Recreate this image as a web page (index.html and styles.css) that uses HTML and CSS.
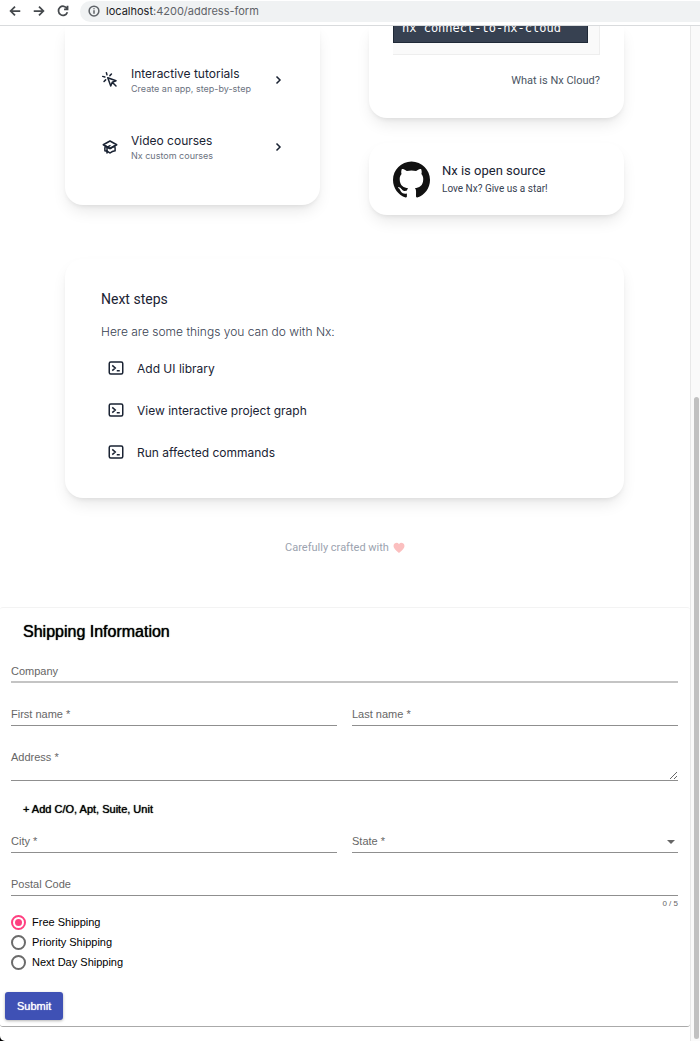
FILE: index.html
```html
<!DOCTYPE html>
<html lang="en">
<head>
    <meta charset="UTF-8">
    <meta name="viewport" content="width=device-width, initial-scale=1.0">
    <title>Address Form</title>
    <link rel="stylesheet" href="styles.css">
</head>
<body>

<!-- icons used more than once -->
<svg class="sprite" aria-hidden="true">
    <symbol id="chevron" viewBox="0 0 24 24"><path d="M9 5l7 7-7 7"/></symbol>
    <symbol id="terminal" viewBox="0 0 24 24"><path d="M7 8.500l4 3.500-4 3.500m6 0h4M5 20h14a2 2 0 002-2V6a2 2 0 00-2-2H5a2 2 0 00-2 2v12a2 2 0 002 2z"/></symbol>
</svg>

<div class="window">
    <header class="toolbar">
        <button type="button" aria-label="Back"><svg viewBox="0 0 16 16"><path d="M14 8H3M8 3L3 8l5 5"/></svg></button>
        <button type="button" aria-label="Forward"><svg viewBox="0 0 16 16"><path d="M2 8h11M8 3l5 5-5 5"/></svg></button>
        <button type="button" aria-label="Reload"><svg viewBox="0 0 16 16"><path d="M12.6 5.2A5.2 5.2 0 1013 9.400M13.200 2v4H9.200"/></svg></button>
        <div class="address">
            <svg viewBox="0 0 16 16"><circle cx="8" cy="8" r="6.500"/><path d="M8 7v4.500M8 4.200v1.600"/></svg>
            <span>localhost<span class="path">:4200/address-form</span></span>
        </div>
    </header>

    <div class="viewport">
        <main class="page">
            <section class="columns">
                <div class="card learning">
                    <a href="#" class="item">
                        <svg class="icon" viewBox="0 0 24 24"><path d="M15 15l-2 5L9 9l11 4-5 2zm0 0l5 5M7.188 2.239l.777 2.897M5.136 7.965l-2.898-.777M13.950 4.050l-2.122 2.122m-5.657 5.656l-2.120 2.122"/></svg>
                        <span class="item-text">Interactive tutorials<small>Create an app, step-by-step</small></span>
                        <svg class="chevron"><use href="#chevron"/></svg>
                    </a>
                    <a href="#" class="item">
                        <svg class="icon" viewBox="0 0 24 24"><path d="M12 14l9-5-9-5-9 5 9 5z"/><path d="M12 14l6.160-3.422a12.083 12.083 0 01.665 6.479A11.952 11.952 0 0012 20.055a11.952 11.952 0 00-6.824-2.998 12.078 12.078 0 01.665-6.479L12 14zm-4 6v-7.500l4-2.222"/></svg>
                        <span class="item-text">Video courses<small>Nx custom courses</small></span>
                        <svg class="chevron"><use href="#chevron"/></svg>
                    </a>
                </div>

                <div class="stack">
                    <div class="card cloud">
                        <div class="code-box"><pre>nx connect-to-nx-cloud</pre></div>
                        <a href="#">What is Nx Cloud?</a>
                    </div>
                    <a href="#" class="card github">
                        <svg viewBox="0 0 24 24"><path d="M12 .297c-6.630 0-12 5.373-12 12 0 5.303 3.438 9.800 8.205 11.385.600.113.820-.258.820-.577 0-.285-.010-1.040-.015-2.040-3.338.724-4.042-1.610-4.042-1.610C4.422 18.070 3.633 17.700 3.633 17.700c-1.087-.744.084-.729.084-.729 1.205.084 1.838 1.236 1.838 1.236 1.070 1.835 2.809 1.305 3.495.998.108-.776.417-1.305.760-1.605-2.665-.300-5.466-1.332-5.466-5.930 0-1.310.465-2.380 1.235-3.220-.135-.303-.540-1.523.105-3.176 0 0 1.005-.322 3.300 1.230.960-.267 1.980-.399 3-.405 1.020.006 2.040.138 3 .405 2.280-1.552 3.285-1.230 3.285-1.230.645 1.653.240 2.873.120 3.176.765.840 1.230 1.910 1.230 3.220 0 4.610-2.805 5.625-5.475 5.920.420.360.810 1.096.810 2.220 0 1.606-.015 2.896-.015 3.286 0 .315.210.690.825.570C20.565 22.092 24 17.592 24 12.297c0-6.627-5.373-12-12-12"/></svg>
                        <span>Nx is open source<small>Love Nx? Give us a star!</small></span>
                    </a>
                </div>
            </section>

            <section class="card steps">
                <h2>Next steps</h2>
                <p>Here are some things you can do with Nx:</p>
                <button type="button"><svg><use href="#terminal"/></svg>Add UI library</button>
                <button type="button"><svg><use href="#terminal"/></svg>View interactive project graph</button>
                <button type="button"><svg><use href="#terminal"/></svg>Run affected commands</button>
            </section>

            <p class="love">Carefully crafted with
                <svg viewBox="0 0 24 24"><path d="M12 22C5 16 1 12.500 1 8a6 6 0 0111-3.500A6 6 0 0123 8c0 4.500-4 8-11 14z"/></svg>
            </p>

            <form class="shipping">
                <h2>Shipping Information</h2>

                <div class="row">
                    <div class="field company">
                        <label for="company">Company</label>
                        <input type="text" id="company">
                    </div>
                </div>
                <div class="row two">
                    <div class="field">
                        <label for="firstName">First name *</label>
                        <input type="text" id="firstName">
                    </div>
                    <div class="field">
                        <label for="lastName">Last name *</label>
                        <input type="text" id="lastName">
                    </div>
                </div>
                <div class="row">
                    <div class="field">
                        <label for="address">Address *</label>
                        <textarea id="address"></textarea>
                    </div>
                </div>

                <button type="button" class="add-unit">+ Add C/O, Apt, Suite, Unit</button>

                <div class="row two">
                    <div class="field">
                        <label for="city">City *</label>
                        <input type="text" id="city">
                    </div>
                    <div class="field select">
                        <label for="state">State *</label>
                        <select id="state"><option value=""></option></select>
                    </div>
                </div>
                <div class="row">
                    <div class="field">
                        <label for="postalCode">Postal Code</label>
                        <input type="text" id="postalCode" maxlength="5">
                    </div>
                    <div class="hint">0 / 5</div>
                </div>

                <div class="radios">
                    <label><input type="radio" name="shipping" checked>Free Shipping</label>
                    <label><input type="radio" name="shipping">Priority Shipping</label>
                    <label><input type="radio" name="shipping">Next Day Shipping</label>
                </div>

                <button type="submit" class="submit">Submit</button>
            </form>
        </main>

        <div class="scrollbar"><div class="thumb"></div></div>
    </div>
</div>

</body>
</html>
```
FILE: styles.css
```css
* {
    box-sizing: border-box;
}

body {
    margin: 0;
    background: #000;
    color: #1a2333;
    font-family: Roboto, sans-serif;
    font-size: 12px;
}

h2, p, pre {
    margin: 0;
    font-weight: 400;
}

a {
    color: inherit;
    text-decoration: none;
}

button {
    padding: 0;
    border: 0;
    background: none;
    color: inherit;
    font: inherit;
    cursor: pointer;
}

svg {
    flex: none;
    fill: none;
    stroke: currentColor;
    stroke-width: 2;
}

.sprite {
    display: none;
}

.window {
    display: flex;
    flex-direction: column;
    min-height: 100vh;
    background: #fff;
    border-bottom-left-radius: 5px;
    overflow: hidden;
}

/* browser bar */
.toolbar {
    display: flex;
    align-items: center;
    height: 26px;
    padding: 0 0 3px 8px;
    border-bottom: 1px solid #d9dbdd;
    color: #45494d;
}

.toolbar button {
    width: 14px;
    height: 14px;
    margin-right: 10px;
}

.toolbar svg {
    display: block;
    width: 14px;
    height: 14px;
}

.address {
    display: flex;
    flex: 1;
    align-items: center;
    gap: 6px;
    height: 21px;
    padding-left: 8px;
    border-radius: 11px 0 0 11px;
    background: #f0f2f3;
    color: #202124;
    font-family: Inter, sans-serif;
    font-size: 11px;
}

.address svg {
    width: 12px;
    height: 12px;
    color: #5f6368;
}

.path {
    color: #5f6368;
}

.viewport {
    display: flex;
    flex: 1;
}

.page {
    flex: 1;
    min-width: 0;
    overflow: hidden;
}

.scrollbar {
    display: flex;
    width: 10px;
    padding: 0 1px 2px 3px;
    border-left: 1px solid #e8e8e8;
    background: #fafafa;
}

.thumb {
    align-self: flex-end;
    width: 6px;
    height: 642px;
    border-radius: 3px;
    background: #c1c1c1;
}

/* Nx welcome cards */
.card {
    border-radius: 18px;
    background: #fff;
    box-shadow: 0 8px 16px -3px rgba(0, 0, 0, 0.1), 0 3px 5px -2px rgba(0, 0, 0, 0.08);
}

.columns {
    display: grid;
    grid-template-columns: 1fr 1fr;
    gap: 49px;
    align-items: start;
    padding: 0 66px 0 65px;
}

.learning {
    display: flex;
    flex-direction: column;
    gap: 38px;
    padding: 40px 36px 43px;
    border-radius: 0 0 18px 18px;
}

.item {
    display: flex;
    align-items: center;
    gap: 12px;
    font-family: Inter, sans-serif;
}

.item .icon {
    width: 18px;
    height: 18px;
    margin-bottom: 2px;
    stroke-linecap: round;
    stroke-linejoin: round;
}

.item-text {
    flex: 1;
    line-height: 16px;
}

.item small {
    display: block;
    color: #6b7280;
    font-size: 9px;
    line-height: 13px;
}

.chevron {
    width: 12px;
    height: 12px;
    margin-bottom: 2px;
    stroke-width: 3;
}

.stack {
    display: grid;
    gap: 25px;
}

.cloud {
    height: 92px;
    padding: 0 24px;
    border-radius: 0 0 18px 18px;
    color: #4b5563;
    font-size: 11px;
    text-align: right;
}

/* scrolled partly under the browser bar */
.code-box {
    margin: -9px 0 19px;
    padding: 0 11px 11px 0;
    border: 1px solid #eee;
    border-left: 0;
    background: #fafafa;
    text-align: left;
}

.code-box pre {
    padding: 2px 8px 7px;
    border: 1px solid #1f2937;
    background: #374151;
    color: #fff;
    font: 12px/14px "DejaVu Sans Mono", monospace;
}

.github {
    display: flex;
    align-items: center;
    gap: 12px;
    height: 72px;
    padding: 0 24px;
    font-size: 13px;
    line-height: 20px;
}

.github svg {
    width: 37px;
    height: 37px;
    fill: #111;
    stroke: none;
}

.github small {
    display: block;
    color: #374151;
    font-size: 10px;
    line-height: 16px;
}

.steps {
    display: flex;
    flex-direction: column;
    align-items: flex-start;
    margin: 44px 66px 0 65px;
    padding: 30px 36px 25px;
}

.steps h2 {
    font-size: 14px;
    line-height: 21px;
}

.steps p {
    margin: 12px 0 5px;
    color: #374151;
    font-family: Inter, sans-serif;
    font-weight: 300;
    line-height: 20px;
}

.steps button {
    display: flex;
    align-items: center;
    gap: 12px;
    height: 42px;
    padding: 0 6px;
    font-family: Inter, sans-serif;
}

.steps svg {
    width: 18px;
    height: 18px;
}

.love {
    display: flex;
    align-items: center;
    justify-content: center;
    gap: 4px;
    margin: 40px 0 49px;
    color: #9ca3af;
    font-size: 11px;
    line-height: 20px;
}

.love svg {
    width: 12px;
    height: 12px;
    fill: #fbbfbf;
    stroke: none;
}

/* shipping form */
.shipping {
    padding: 16px 12px 6px 11px;
    border-top: 1px solid #f3f3f3;
    border-bottom: 1px solid #aaa;
    border-radius: 3px;
    color: #000;
    font-family: "Liberation Sans", sans-serif;
    font-size: 11px;
}

.shipping h2 {
    padding-left: 12px;
    font-size: 16px;
    line-height: 16px;
}

/* medium weight */
.shipping h2,
.add-unit,
.submit {
    text-shadow: 0 0 1px currentColor;
}

.row {
    margin-top: 21px;
}

.two {
    display: grid;
    grid-template-columns: 1fr 1fr;
    gap: 15px;
}

.field {
    display: grid;
    color: #666;
}

/* the label lies inside the empty control */
.field label,
.field input,
.field textarea,
.field select {
    grid-area: 1 / 1;
    width: 100%;
    line-height: 21px;
}

.field label {
    pointer-events: none;
}

.field input,
.field textarea,
.field select {
    height: 22px;
    padding: 0;
    border: 0;
    border-bottom: 1px solid #8f8f8f;
    border-radius: 0;
    background: none;
    font: inherit;
    outline: none;
    appearance: none;
}

.field textarea {
    height: 34px;
    resize: vertical;
}

.company input {
    border-bottom: 2px solid #c4c4c4;
}

.select::after {
    grid-area: 1 / 1;
    place-self: center end;
    margin-right: 3px;
    border: 4px solid transparent;
    border-top-color: #666;
    border-bottom: 0;
    content: "";
    pointer-events: none;
}

.hint {
    height: 16px;
    color: #666;
    font-size: 8px;
    line-height: 16px;
    text-align: right;
}

.add-unit {
    display: block;
    height: 23px;
    margin: 16px 0 0 12px;
}

.add-unit + .row {
    margin-top: 11px;
}

.radios label {
    display: flex;
    align-items: center;
    gap: 6px;
    height: 20px;
}

.radios input {
    width: 15px;
    height: 15px;
    margin: 0;
    border: 2px solid #6b6b6b;
    border-radius: 50%;
    appearance: none;
}

.radios input:checked {
    padding: 2px;
    border-color: #ff4081;
    background: #ff4081 content-box;
}

.submit {
    display: block;
    height: 28px;
    margin: 20px 0 0 -6px;
    padding: 0 12px;
    border-radius: 3px;
    background: #3f51b5;
    box-shadow: 0 1px 3px rgba(0, 0, 0, 0.3);
    color: #fff;
}
```
